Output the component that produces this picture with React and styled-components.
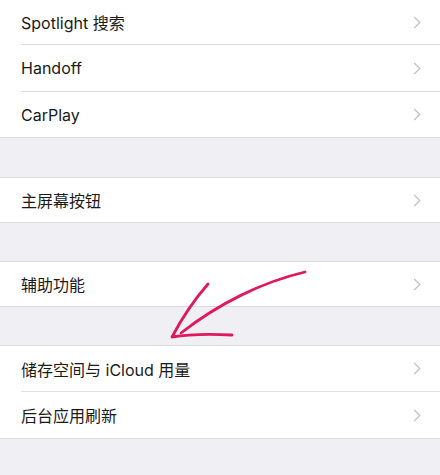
import React from "react";
import styled, { createGlobalStyle } from "styled-components";

const Global = createGlobalStyle`
  html, body { margin: 0; padding: 0; background: #efeff4; }
  body { font-family: "Inter", "Noto Sans CJK SC", sans-serif; }
`;

const Page = styled.div`
  position: relative;
  width: 440px;
  height: 475px;
  overflow: hidden;
  background: #efeff4;
  display: flex;
  flex-direction: column;
`;

const Group = styled.div`
  background: #fff;
  border-top: ${(p) => (p.$noTop ? "none" : "1px solid #dcdce0")};
  border-bottom: 1px solid #dcdce0;
  display: flex;
  flex-direction: column;
`;

const Gap = styled.div`
  height: ${(p) => p.$h}px;
  flex-shrink: 0;
`;

const Row = styled.div`
  height: ${(p) => p.$h}px;
  display: flex;
  align-items: center;
  padding-left: 21px;
  position: relative;
  &:not(:last-child)::after {
    content: "";
    position: absolute;
    left: 21px;
    right: 0;
    bottom: -1px;
    height: 1px;
    background: #e0e0e3;
  }
  &:not(:last-child) {
    margin-bottom: 1px;
  }
`;

const Label = styled.span`
  flex: 1;
  font-size: 16px;
  color: #1a1a1a;
  letter-spacing: 0;
`;

const Chevron = styled.svg`
  width: 8px;
  height: 13px;
  margin-right: 19px;
  flex-shrink: 0;
`;

const Arrow = styled.svg`
  position: absolute;
  left: 0;
  top: 0;
  width: 440px;
  height: 475px;
  pointer-events: none;
`;

const Chev = () => (
  <Chevron viewBox="0 0 8 13">
    <path d="M1.2 1 L6.8 6.5 L1.2 12" fill="none" stroke="#c4c4c9" strokeWidth="1.4" />
  </Chevron>
);

const Item = ({ h, children }) => (
  <Row $h={h}>
    <Label>{children}</Label>
    <Chev />
  </Row>
);

export default function App() {
  return (
    <>
      <Global />
      <Page>
        <Group $noTop>
          <Item h={44}>Spotlight 搜索</Item>
          <Item h={46}>Handoff</Item>
          <Item h={45}>CarPlay</Item>
        </Group>
        <Gap $h={39} />
        <Group>
          <Item h={44}>主屏幕按钮</Item>
        </Group>
        <Gap $h={38} />
        <Group>
          <Item h={44}>辅助功能</Item>
        </Group>
        <Gap $h={38} />
        <Group>
          <Item h={45}>储存空间与 iCloud 用量</Item>
          <Item h={46}>后台应用刷新</Item>
        </Group>
        <Arrow viewBox="0 0 440 475">
          <path
            d="M305 272 C 262 282, 218 304, 181 333"
            fill="none"
            stroke="#e0185e"
            strokeWidth="2.8"
            strokeLinecap="round"
          />
          <path
            d="M208 284 C 194 300, 182 318, 172 337 C 190 334, 212 334, 232 335"
            fill="none"
            stroke="#e0185e"
            strokeWidth="2.8"
            strokeLinecap="round"
            strokeLinejoin="round"
          />
        </Arrow>
      </Page>
    </>
  );
}
